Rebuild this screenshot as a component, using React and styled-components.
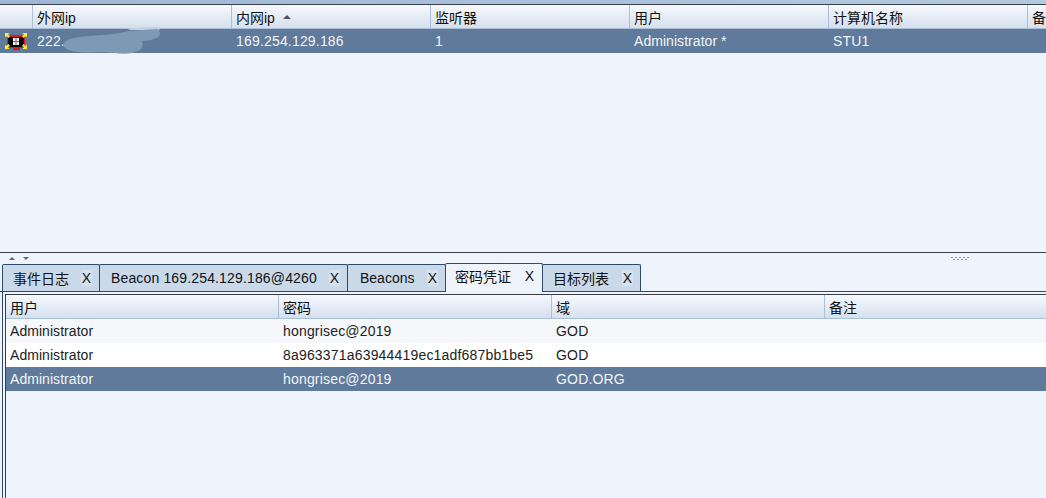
import React from 'react'
import styled, { createGlobalStyle } from 'styled-components'

const targets = [
  { ip: '222.', inner: '169.254.129.186', listener: '1', user: 'Administrator *', computer: 'STU1' },
]

const credentials = [
  { user: 'Administrator', password: 'hongrisec@2019', realm: 'GOD' },
  { user: 'Administrator', password: '8a963371a63944419ec1adf687bb1be5', realm: 'GOD' },
  { user: 'Administrator', password: 'hongrisec@2019', realm: 'GOD.ORG', selected: true },
]

const tabs = [
  { label: '事件日志', width: 98, pad: 10 },
  { label: 'Beacon 169.254.129.186@4260', width: 249, pad: 11, latin: true },
  { label: 'Beacons', width: 99, pad: 12 },
  { label: '密码凭证', width: 98, pad: 9, active: true },
  { label: '目标列表', width: 99, pad: 10 },
]

const topColumns = '33px 199px 199px 199px 199px 199px 1fr'
const bottomColumns = '273px 273px 273px 1fr'

function BeaconIcon() {
  return (
    <svg width="22" height="17" viewBox="0 0 22 17">
      <rect x="2" y="2" width="18" height="13" fill="#e8141c" />
      <rect x="3" y="4" width="16" height="10" fill="#050505" />
      <rect x="8" y="5" width="6" height="7" fill="#f4f4f4" />
      <path d="M8 8.5h6M11 5v7" stroke="#666" strokeWidth="1" />
      <rect x="8" y="15" width="7" height="2" fill="#e8141c" />
      <g fill="#ffe93a">
        <path d="M0 0h4.5l-1.4 1.4 1.9 1.9-1.7 1.7-1.9-1.9L0 4.5z" />
        <path d="M22 0h-4.5l1.4 1.4-1.9 1.9 1.7 1.7 1.9-1.9L22 4.5z" />
        <path d="M0 16h4.5l-1.4-1.4 1.9-1.9-1.7-1.7-1.9 1.9L0 11.5z" />
        <path d="M22 16h-4.5l1.4-1.4-1.9-1.9 1.7-1.7 1.9 1.9L22 11.5z" />
      </g>
    </svg>
  )
}

function Smear() {
  return (
    <SmearLayer width="110" height="30" viewBox="0 0 110 30">
      <path d="M68 3C76 1 88 1 98 1L100 4L70 4Z" fill="#c3d1e0" />
      <path
        d="M3 19C5 13 14 11 30 10C44 9 58 8 68 5L98 3C101 6 101 10 96 12C92 14 88 15 82 15C84 20 82 25 72 27C62 29 52 26 40 26C26 27 6 27 3 19Z"
        fill="#7e99b4"
      />
    </SmearLayer>
  )
}

function HeaderCell({ children, sort }) {
  return (
    <HeadCell>
      {children}
      {sort && <SortArrow />}
    </HeadCell>
  )
}

export default function App() {
  return (
    <Page>
      <GlobalStyle />
      <TopStrip />
      <TopPane>
        <HeadRow $columns={topColumns}>
          <HeaderCell />
          <HeaderCell>外网ip</HeaderCell>
          <HeaderCell sort>内网ip</HeaderCell>
          <HeaderCell>监听器</HeaderCell>
          <HeaderCell>用户</HeaderCell>
          <HeaderCell>计算机名称</HeaderCell>
          <HeaderCell>备</HeaderCell>
        </HeadRow>
        {targets.map((t) => (
          <BodyRow key={t.inner} $columns={topColumns} $selected>
            <IconCell><BeaconIcon /></IconCell>
            <BodyCell>
              {t.ip}
              <Smear />
            </BodyCell>
            <BodyCell>{t.inner}</BodyCell>
            <BodyCell>{t.listener}</BodyCell>
            <BodyCell $tight>{t.user}</BodyCell>
            <BodyCell>{t.computer}</BodyCell>
            <BodyCell />
          </BodyRow>
        ))}
      </TopPane>
      <Divider>
        <Arrows>
          <UpArrow />
          <DownArrow />
        </Arrows>
        <Grip>
          <GripRow>{[0, 1, 2, 3, 4].map((i) => <GripDot key={i} />)}</GripRow>
          <GripRow $shift>{[0, 1, 2, 3].map((i) => <GripDot key={i} />)}</GripRow>
        </Grip>
      </Divider>
      <TabBar>
        {tabs.map((tab) => (
          <Tab key={tab.label} $width={tab.width} $pad={tab.pad} $active={tab.active}>
            <TabLabel $latin={tab.latin}>{tab.label}</TabLabel>
            <CloseMark>X</CloseMark>
          </Tab>
        ))}
      </TabBar>
      <BottomPane>
        <InnerTable>
          <HeadRow $columns={bottomColumns}>
            <HeaderCell>用户</HeaderCell>
            <HeaderCell>密码</HeaderCell>
            <HeaderCell>域</HeaderCell>
            <HeaderCell>备注</HeaderCell>
          </HeadRow>
          {credentials.map((c, i) => (
            <BodyRow key={c.password + c.realm} $columns={bottomColumns} $selected={c.selected} $stripe={i % 2 === 0 ? '#f6f7fa' : '#ffffff'}>
              <BodyCell $tight>{c.user}</BodyCell>
              <BodyCell>{c.password}</BodyCell>
              <BodyCell>{c.realm}</BodyCell>
              <BodyCell />
            </BodyRow>
          ))}
        </InnerTable>
      </BottomPane>
    </Page>
  )
}

const GlobalStyle = createGlobalStyle`
  html, body {
    margin: 0;
    padding: 0;
    overflow: hidden;
    background: #eff3fb;
  }
`

const Page = styled.div`
  width: 1046px;
  height: 498px;
  display: flex;
  flex-direction: column;
  overflow: hidden;
  background: #eff3fb;
  color: #111;
  font-family: "Liberation Sans", "Noto Sans CJK SC", sans-serif;
  font-size: 14px;
`

const TopStrip = styled.div`
  height: 4px;
  flex: none;
  background: linear-gradient(90deg, #9db8d6, #b3c9e1);
`

const TopPane = styled.div`
  height: 249px;
  flex: none;
  box-sizing: border-box;
  border-top: 1px solid #3a3f46;
  border-bottom: 1px solid #3f4348;
`

const HeadRow = styled.div`
  display: grid;
  grid-template-columns: ${(p) => p.$columns};
  height: 24px;
  box-sizing: border-box;
  border-bottom: 1px solid #a9c0d8;
  background: linear-gradient(#f6f9fe, #d5e0ec);
`

const HeadCell = styled.div`
  display: flex;
  align-items: center;
  gap: 8px;
  padding-left: 4px;
  border-right: 1px solid #a9c0d8;
  white-space: nowrap;
  overflow: hidden;
  &:last-child {
    border-right: none;
  }
`

const SortArrow = styled.i`
  width: 0;
  height: 0;
  border-left: 4px solid transparent;
  border-right: 4px solid transparent;
  border-bottom: 4px solid #555;
`

const BodyRow = styled.div`
  display: grid;
  grid-template-columns: ${(p) => p.$columns};
  height: 24px;
  align-items: center;
  background: ${(p) => (p.$selected ? '#5f7a9a' : p.$stripe || 'transparent')};
  color: ${(p) => (p.$selected ? '#f2f5f9' : '#222')};
`

const BodyCell = styled.div`
  position: relative;
  padding-left: 4px;
  letter-spacing: ${(p) => (p.$tight ? '0.05px' : '0.18px')};
  white-space: nowrap;
`

const IconCell = styled.div`
  display: flex;
  padding-left: 5px;
  height: 17px;
  margin-top: 1px;
`

const SmearLayer = styled.svg`
  position: absolute;
  left: 27px;
  top: -7px;
`

const Divider = styled.div`
  height: 11px;
  flex: none;
  display: flex;
  align-items: center;
  justify-content: space-between;
  padding: 0 77px 0 9px;
`

const Arrows = styled.div`
  display: flex;
  gap: 8px;
`

const UpArrow = styled.i`
  width: 0;
  height: 0;
  border-left: 3px solid transparent;
  border-right: 3px solid transparent;
  border-bottom: 3px solid #666;
`

const DownArrow = styled.i`
  width: 0;
  height: 0;
  border-left: 3px solid transparent;
  border-right: 3px solid transparent;
  border-top: 3px solid #666;
`

const Grip = styled.div`
  display: flex;
  flex-direction: column;
  gap: 1px;
`

const GripRow = styled.div`
  display: flex;
  gap: 2px;
  margin-left: ${(p) => (p.$shift ? '2px' : '0')};
`

const GripDot = styled.i`
  width: 2px;
  height: 1px;
  background: #7d8fa6;
`

const TabBar = styled.div`
  height: 28px;
  flex: none;
  display: flex;
  align-items: flex-end;
  padding-left: 2px;
  box-sizing: border-box;
  border-bottom: 1px solid #2d4a68;
`

const Tab = styled.div`
  width: ${(p) => p.$width}px;
  height: ${(p) => (p.$active ? '29px' : '27px')};
  flex: none;
  display: flex;
  align-items: center;
  justify-content: space-between;
  box-sizing: border-box;
  padding: 0 7px ${(p) => (p.$active ? '4px' : '0')} ${(p) => p.$pad}px;
  border: 1px solid #2d4a68;
  border-bottom: none;
  border-radius: 2px 2px 0 0;
  margin-right: -1px;
  margin-bottom: ${(p) => (p.$active ? '-1px' : '0')};
  background: ${(p) => (p.$active ? '#eff3fb' : '#cad9e9')};
  position: relative;
  z-index: ${(p) => (p.$active ? 1 : 0)};
`

const TabLabel = styled.span`
  letter-spacing: ${(p) => (p.$latin ? '0.15px' : '0')};
  white-space: nowrap;
`

const CloseMark = styled.span`
  font-size: 14px;
  background: rgba(239, 243, 251, 0.35);
  padding: 0 1px;
`

const BottomPane = styled.div`
  flex: 1;
  min-height: 0;
  margin-left: 2px;
  padding: 2px 0 0 2px;
  display: flex;
  border-left: 1px solid #2d4a68;
`

const InnerTable = styled.div`
  flex: 1;
  min-width: 0;
  box-sizing: border-box;
  border-left: 1px solid #3a3f46;
  border-top: 1px solid #3a3f46;
`
